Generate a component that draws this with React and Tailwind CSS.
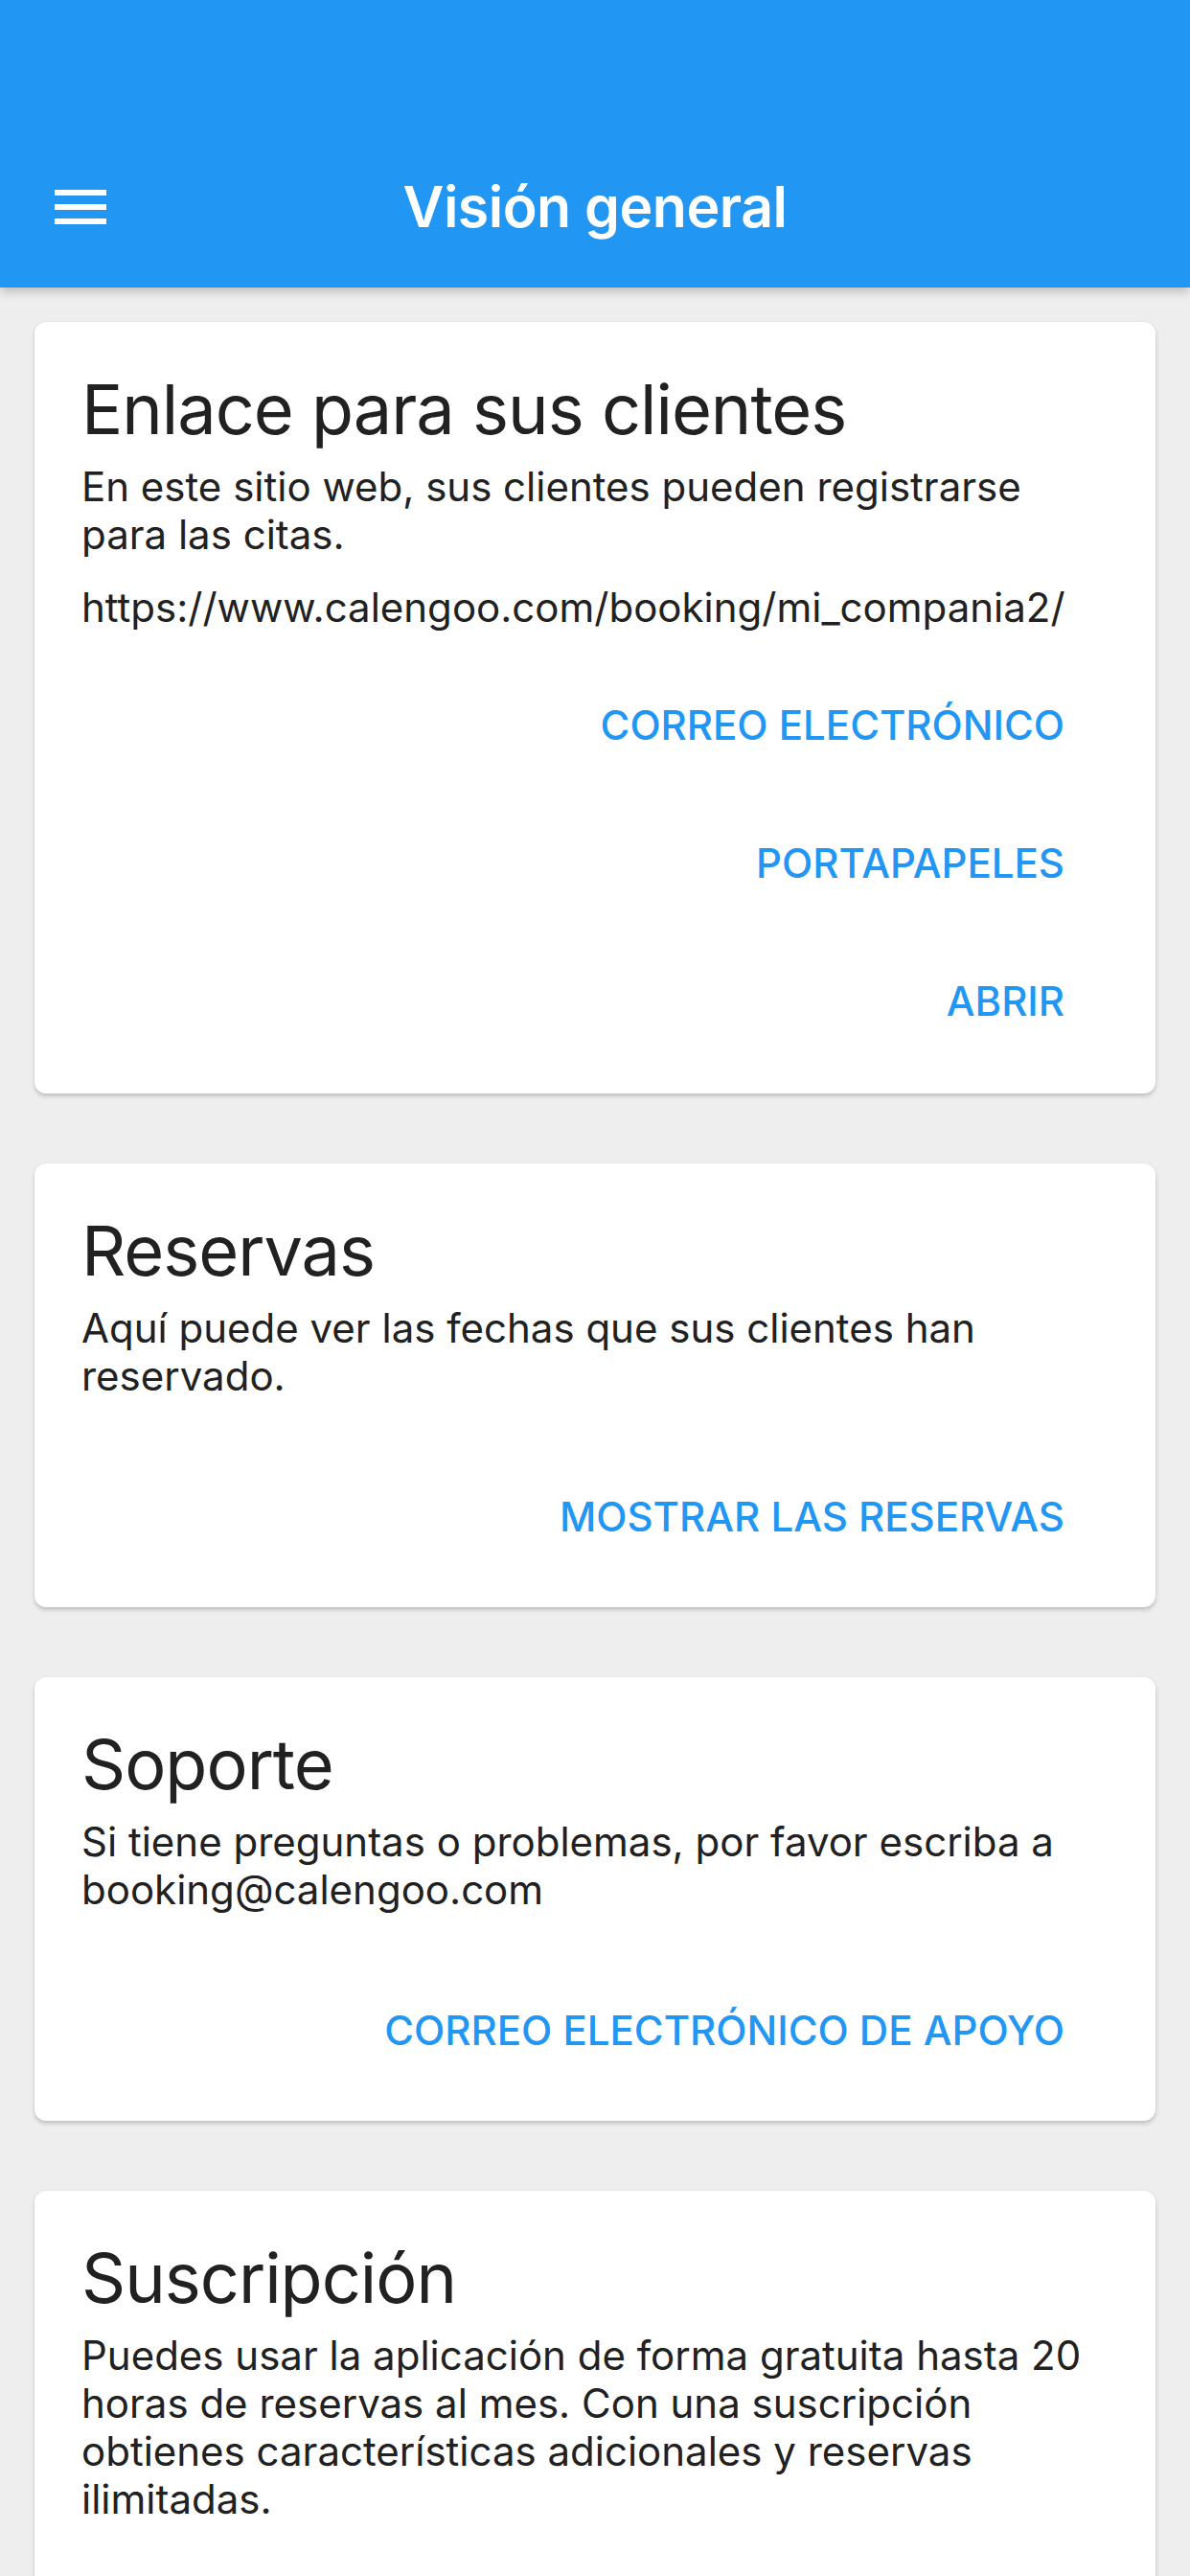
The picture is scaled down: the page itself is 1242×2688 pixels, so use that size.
import React from 'react';

const font = { fontFamily: 'Inter, "Noto Sans", sans-serif' };

function MenuIcon() {
  return (
    <svg width="54" height="36" viewBox="0 0 54 36" className="block">
      <rect x="0" y="0" width="54" height="6" fill="#fff" />
      <rect x="0" y="15" width="54" height="6" fill="#fff" />
      <rect x="0" y="30" width="54" height="6" fill="#fff" />
    </svg>
  );
}

function Card({ title, children, className = '' }) {
  return (
    <div
      className={`bg-white rounded-[12px] shadow-[0_3px_4px_rgba(0,0,0,0.18),0_0_2px_rgba(0,0,0,0.08)] pl-[49px] pr-[62px] pt-[55px] ${className}`}
    >
      <h2 className="text-[72px] leading-[72px] font-normal text-[#212121] tracking-[-1px]">{title}</h2>
      {children}
    </div>
  );
}

function Body({ children, className = '' }) {
  return (
    <p className={`text-[42px] leading-[50px] text-[#212121] ${className}`}>{children}</p>
  );
}

function ActionButton({ children }) {
  return (
    <div className="h-[144px] flex items-center justify-end pr-[33px]">
      <span className="text-[42px] leading-[50px] font-medium text-[#2196f3]">{children}</span>
    </div>
  );
}

export default function App() {
  return (
    <div className="w-[1242px] h-[2688px] overflow-hidden bg-[#eeeeee]" style={font}>
      <header className="relative z-10 h-[300px] bg-[#2196f3] pt-[132px] shadow-[0_4px_10px_rgba(0,0,0,0.22)]">
        <div className="relative h-[168px] flex items-center justify-center">
          <div className="absolute left-[57px] top-[66px]">
            <MenuIcon />
          </div>
          <h1 className="text-[59px] font-semibold text-white tracking-[-0.5px]">Visión general</h1>
        </div>
      </header>

      <main className="px-[36px] pt-[36px] flex flex-col gap-[73px]">
        <Card title="Enlace para sus clientes" className="pb-[24px]">
          <Body className="mt-[20px]">En este sitio web, sus clientes pueden registrarse para las citas.</Body>
          <Body className="mt-[26px]">https://www.calengoo.com/booking/mi_compania2/</Body>
          <div className="mt-[26px] flex flex-col">
            <ActionButton>CORREO ELECTRÓNICO</ActionButton>
            <ActionButton>PORTAPAPELES</ActionButton>
            <ActionButton>ABRIR</ActionButton>
          </div>
        </Card>

        <Card title="Reservas" className="pb-[22px]">
          <Body className="mt-[20px]">Aquí puede ver las fechas que sus clientes han reservado.</Body>
          <div className="mt-[50px]">
            <ActionButton>MOSTRAR LAS RESERVAS</ActionButton>
          </div>
        </Card>

        <Card title="Soporte" className="pb-[22px]">
          <Body className="mt-[20px]">Si tiene preguntas o problemas, por favor escriba a booking@calengoo.com</Body>
          <div className="mt-[50px]">
            <ActionButton>CORREO ELECTRÓNICO DE APOYO</ActionButton>
          </div>
        </Card>

        <Card title="Suscripción" className="pb-[200px]">
          <Body className="mt-[20px]">
            Puedes usar la aplicación de forma gratuita hasta 20 horas de reservas al mes. Con una suscripción
            obtienes características adicionales y reservas ilimitadas.
          </Body>
        </Card>
      </main>
    </div>
  );
}
